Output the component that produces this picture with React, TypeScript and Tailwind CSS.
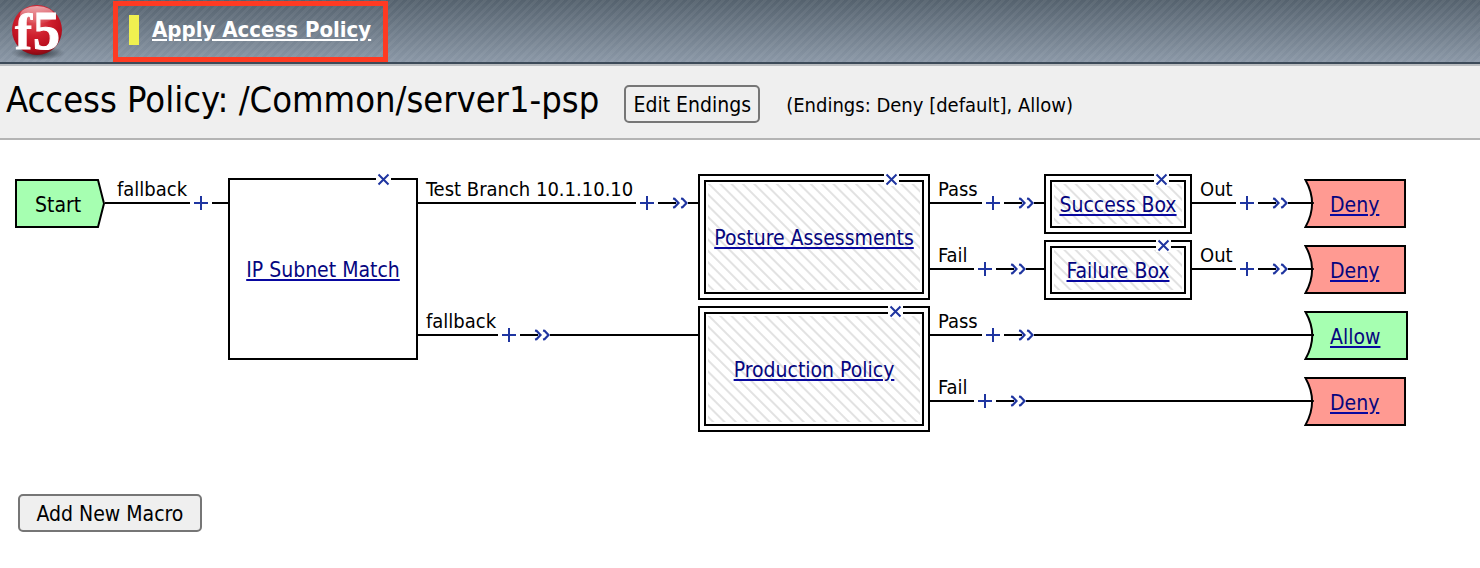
import type { ReactNode } from "react";

type Step = { label: string; place: string; chevrons?: boolean; tail: string; indent?: string };

/* Branches: each is a captioned line, a "+" insert link, an optional swap link and a trailing line. */
const branches: Step[] = [
  { label: "fallback", place: "top-[38px] left-[105px] w-[124px]", tail: "w-[85px]", indent: "pl-3" },
  { label: "Test Branch 10.1.10.10", place: "top-[38px] left-[418px] w-[281px]", chevrons: true, tail: "w-[218px]" },
  { label: "fallback", place: "top-[170px] left-[418px] w-[281px]", chevrons: true, tail: "w-[80px]" },
  { label: "Pass", place: "top-[38px] left-[930px] w-[115px]", chevrons: true, tail: "w-[52px]" },
  { label: "Fail", place: "top-[104px] left-[930px] w-[115px]", chevrons: true, tail: "w-[44px]" },
  { label: "Pass", place: "top-[170px] left-[930px] w-[383px]", chevrons: true, tail: "w-[52px]" },
  { label: "Fail", place: "top-[236px] left-[930px] w-[383px]", chevrons: true, tail: "w-[44px]" },
  { label: "Out", place: "top-[38px] left-[1192px] w-[121px]", chevrons: true, tail: "w-[44px]" },
  { label: "Out", place: "top-[104px] left-[1192px] w-[121px]", chevrons: true, tail: "w-[44px]" },
];

const endings = [
  { label: "Deny", place: "top-[38px] w-[102px]", fill: "#ff9a92" },
  { label: "Deny", place: "top-[104px] w-[102px]", fill: "#ff9a92" },
  { label: "Allow", place: "top-[170px] w-[104px]", fill: "#a6ffb1" },
  { label: "Deny", place: "top-[236px] w-[102px]", fill: "#ff9a92" },
];

function Logo() {
  return (
    <svg className="h-[62px] w-[60px] shrink-0" viewBox="0 0 60 62" role="img" aria-label="f5">
      <defs>
        <radialGradient id="ball" cx="0.45" cy="0.3" r="0.72">
          <stop offset="0" stopColor="#e0555c" />
          <stop offset="0.45" stopColor="#cf1f2d" />
          <stop offset="0.8" stopColor="#b80d1c" />
          <stop offset="1" stopColor="#7d0a13" />
        </radialGradient>
        <radialGradient id="shade">
          <stop offset="0" stopColor="#20262d" stopOpacity="0.9" />
          <stop offset="1" stopColor="#20262d" stopOpacity="0" />
        </radialGradient>
        <linearGradient id="gloss" x1="0" y1="0" x2="0" y2="1">
          <stop offset="0" stopColor="#fff" stopOpacity="0.6" />
          <stop offset="1" stopColor="#fff" stopOpacity="0" />
        </linearGradient>
      </defs>
      <ellipse cx="30" cy="53" rx="27" ry="7" fill="url(#shade)" />
      <circle cx="29" cy="30" r="25" fill="url(#ball)" />
      <ellipse cx="29" cy="15" rx="17" ry="9" fill="url(#gloss)" />
      <g fill="#fff" stroke="#fff" fontFamily="Liberation Serif, serif" fontWeight="700">
        <text x="7" y="49" fontSize="51" strokeWidth="1">f</text>
        <text x="25" y="49" fontSize="54" strokeWidth="1">5</text>
      </g>
    </svg>
  );
}

function Plus() {
  return (
    <a href="#insert" aria-label="Insert item" className="mx-1 block size-[14px] shrink-0">
      <svg viewBox="0 0 14 14" className="size-full" stroke="#1f35a0" strokeWidth="2">
        <path d="M7 0v14M0 7h14" />
      </svg>
    </a>
  );
}

function Chevrons() {
  return (
    <a href="#swap" aria-label="Swap branches" className="block h-[12px] w-[16px] shrink-0">
      <svg viewBox="0 0 16 12" className="size-full" fill="none" stroke="#1f35a0" strokeWidth="2.200">
        <path d="M0 6H4" stroke="#000" strokeWidth="2" />
        <path d="M1 1.500L2.500 1.800L6.500 6L2.500 10.200L1 10.500M9 1.500L10.500 1.800L14.500 6L10.500 10.200L9 10.500" />
      </svg>
    </a>
  );
}

function Branch({ label, place, chevrons, tail, indent = "pl-2" }: Step) {
  return (
    <div className={`absolute ${place}`}>
      <div className={`h-[18px] text-[20px] leading-[22px] whitespace-nowrap ${indent}`}>{label}</div>
      <div className="flex h-[14px] items-center">
        <span className={`h-[2px] shrink-0 bg-black ${tail}`} />
        <Plus />
        {chevrons && (
          <>
            <span className="h-[2px] w-[14px] shrink-0 bg-black" />
            <Chevrons />
          </>
        )}
        <span className="h-[2px] grow bg-black" />
      </div>
    </div>
  );
}

function NodeLink({ children }: { children: ReactNode }) {
  return (
    <a
      href="#edit"
      className="pt-[2px] text-[21px] leading-6 whitespace-nowrap text-[#06067f] underline decoration-[#0808a0] decoration-2 underline-offset-2"
    >
      {children}
    </a>
  );
}

function Remove({ place, name }: { place: string; name: string }) {
  return (
    <button type="button" aria-label={`Delete ${name}`} className={`absolute h-[13px] w-[15px] bg-white ${place}`}>
      <svg viewBox="0 0 15 13" className="size-full" stroke="#1f35a0" strokeWidth="2">
        <path d="M2.500 1.500l10 10M12.500 1.500l-10 10" />
      </svg>
    </button>
  );
}

function Macro({ name, place, cross }: { name: string; place: string; cross: string }) {
  return (
    <div className={`absolute flex border-2 border-black bg-white p-1 ${place}`}>
      <div className="flex grow items-center justify-center border-2 border-black bg-white bg-[repeating-linear-gradient(45deg,#fff_0px,#fff_5px,#e2e2e2_6px,#e2e2e2_7px,#fff_8px)] bg-clip-content p-[2px]">
        <NodeLink>{name}</NodeLink>
      </div>
      <Remove name={name} place={cross} />
    </div>
  );
}

export default function App() {
  return (
    <div className="min-h-screen bg-white font-['DejaVu_Sans_Condensed','DejaVu_Sans',sans-serif] text-black">
      <header className="flex h-[66px] items-start border-b-2 border-[#b9bcbf] bg-[#3c4a58] pb-[2px]">
        <div className="flex h-[62px] grow items-start bg-[repeating-linear-gradient(135deg,rgba(255,255,255,0.05)_0px,rgba(255,255,255,0.05)_3px,transparent_3px,transparent_6px),linear-gradient(to_bottom,#55626e,#8a97a6)] pl-2">
          <Logo />
          <div className="mt-px ml-[45px] flex h-[61px] w-[275px] items-center border-5 border-[#ff3a22] pb-1 pl-[11px]">
            <span className="h-[30px] w-[10px] bg-[#f0f050]" />
            <a
              href="#apply"
              className="ml-[13px] text-[22px] leading-7 font-bold whitespace-nowrap text-white underline decoration-2 underline-offset-2"
            >
              Apply Access Policy
            </a>
          </div>
        </div>
      </header>

      <section className="flex h-[74px] items-baseline border-b-2 border-[#b4b4b4] bg-[#efefef] pt-3 pl-[6px] whitespace-nowrap">
        <h1 className="text-[36px] leading-[44px]">Access Policy: /Common/server1-psp</h1>
        <button
          type="button"
          className="ml-[25px] h-[38px] w-[136px] rounded-[5px] border-2 border-[#767676] bg-[#efefef] pt-[2px] text-[21px] leading-6"
        >
          Edit Endings
        </button>
        <p className="ml-[26px] text-[20px] leading-6">(Endings: Deny [default], Allow)</p>
      </section>

      <main>
        <div className="relative h-[354px] min-w-[1420px]">
          {branches.map((b) => (
            <Branch key={b.place} {...b} />
          ))}

          <div className="absolute top-[38px] left-[14px] flex h-[51px] w-[92px] items-center pl-[21px]">
            <svg viewBox="0 0 92 51" className="absolute inset-0 size-full">
              <path d="M2 2H84L90 25.500 84 49H2Z" fill="#a6ffb1" stroke="#000" strokeWidth="2" />
            </svg>
            <span className="relative pt-[2px] text-[21px] leading-6">Start</span>
          </div>

          <div className="absolute top-[38px] left-[228px] flex h-[182px] w-[190px] items-center justify-center border-2 border-black bg-white">
            <NodeLink>IP Subnet Match</NodeLink>
            <Remove name="IP Subnet Match" place="-top-[7px] left-[146px]" />
          </div>

          <Macro name="Posture Assessments" place="top-[34px] left-[698px] h-[126px] w-[232px]" cross="-top-[3px] left-[184px]" />
          <Macro name="Production Policy" place="top-[166px] left-[698px] h-[126px] w-[232px]" cross="-top-[3px] left-[188px]" />
          <Macro name="Success Box" place="top-[34px] left-[1044px] h-[60px] w-[148px]" cross="-top-[3px] left-[108px]" />
          <Macro name="Failure Box" place="top-[100px] left-[1044px] h-[60px] w-[148px]" cross="-top-[3px] left-[110px]" />

          {endings.map((e) => (
            <div key={e.place} className={`absolute left-[1304px] flex h-[51px] items-center pl-[26px] ${e.place}`}>
              <svg viewBox="0 0 104 51" preserveAspectRatio="none" className="absolute inset-0 size-full">
                <path d="M1.500 2H103V49H1.500Q15 25.500 1.500 2Z" fill={e.fill} stroke="#000" strokeWidth="2" />
                <path d="M5 25H10" stroke="#000" strokeWidth="2" />
              </svg>
              <span className="relative flex">
                <NodeLink>{e.label}</NodeLink>
              </span>
            </div>
          ))}
        </div>

        <button
          type="button"
          className="ml-[18px] block h-[38px] w-[184px] rounded-[5px] border-2 border-[#767676] bg-[#efefef] pt-[2px] text-[21px] leading-6"
        >
          Add New Macro
        </button>
      </main>
    </div>
  );
}
